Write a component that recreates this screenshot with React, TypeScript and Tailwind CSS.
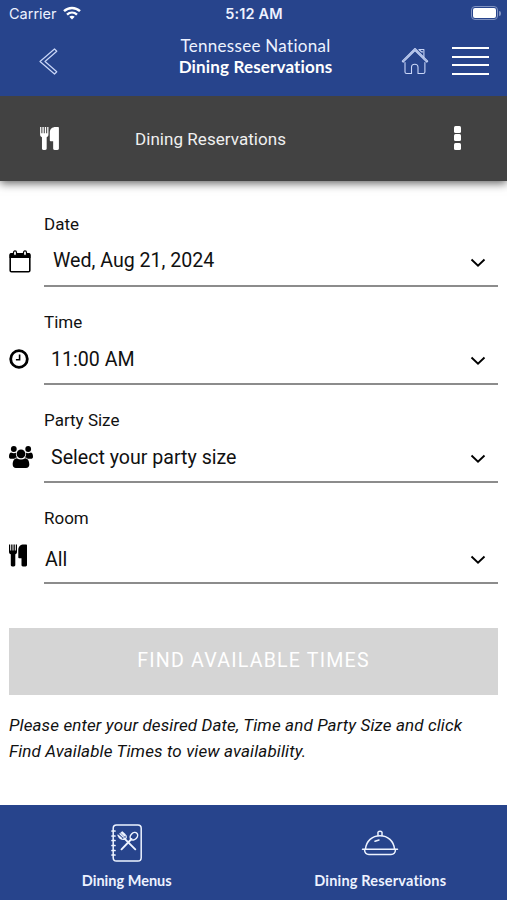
import type { ReactNode } from 'react';

function UtensilsIcon({ className }: { className: string }) {
  return (
    <svg viewBox="0 0 18 22" className={className} fill="currentColor">
      <path d="M0 0h1.2v6h1V0h1.3v6h1V0h1.3v6h1V0H8v7.2c0 1.4-.7 2.1-1.7 2.6v10.8c0 .9-.6 1.4-1.4 1.4H3.2c-.9 0-1.4-.5-1.4-1.4V9.8C.7 9.3 0 8.6 0 7.2Z" />
      <path d="M15 0h2c.7 0 1 .3 1 1v19.6c0 .9-.6 1.4-1.4 1.4h-2.7c-.9 0-1.4-.5-1.4-1.4v-6.900h-2.400c-.5 0-.8-.3-.8-.8V5.500C9.300 2 11.300 0 15 0Z" />
    </svg>
  );
}

function CalendarIcon() {
  return (
    <svg viewBox="0 0 22 23" className="h-[23px] w-[22px]">
      <path d="M2 3h18a1.5 1.5 0 0 1 1.5 1.5V8H.5V4.5A1.5 1.5 0 0 1 2 3Z" fill="#000" />
      <rect x="1.2" y="4" width="19.6" height="17.8" rx="1.3" fill="none" stroke="#000" strokeWidth="1.6" />
      <rect x="4.5" y=".9" width="3" height="4.6" rx="1.5" fill="#fff" stroke="#000" strokeWidth="1.2" />
      <rect x="14.5" y=".9" width="3" height="4.6" rx="1.5" fill="#fff" stroke="#000" strokeWidth="1.2" />
    </svg>
  );
}

function ClockIcon() {
  return (
    <svg viewBox="0 0 20 20" className="mt-px h-5 w-5" fill="none" stroke="#000">
      <circle cx="10" cy="10" r="8.3" strokeWidth="2.8" />
      <path d="M10.6 5.5v5.200H6.900" strokeWidth="1.6" />
    </svg>
  );
}

function GroupIcon() {
  return (
    <svg viewBox="0 0 24 22" className="h-[22px] w-6" fill="#000">
      <circle cx="4.8" cy="3" r="2.9" />
      <circle cx="19.2" cy="3" r="2.9" />
      <path d="M2 6.5c2 .9 4 .8 5 .2-.4 2.300.2 3.700 1.300 4.900-1.300 0-2.200.5-3 1.200H2.200C.8 12.800 0 12 0 10.700c0-2 .5-4 2-4.200ZM22 6.500c-2 .9-4 .8-5 .2.400 2.300-.2 3.700-1.300 4.900 1.300 0 2.200.5 3 1.200h3.100c1.400 0 2.200-.8 2.200-2.100 0-2-.5-4-2-4.200Z" />
      <circle cx="12" cy="7.8" r="4.4" />
      <path d="M7.800 12.200c2.700 1.800 5.700 1.800 8.400 0 2.900.3 4.100 3 4.100 6.400 0 2.200-1.200 3.400-3.300 3.400H7c-2.100 0-3.300-1.200-3.300-3.400 0-3.400 1.200-6.100 4.100-6.400Z" />
    </svg>
  );
}

function HomeIcon() {
  return (
    <svg viewBox="0 0 28 28" className="h-7 w-7" fill="none" stroke="#c9d6f7" strokeWidth="1.1" strokeLinejoin="round" strokeLinecap="round">
      <path d="M1.300 14.200 14 1.500l12.700 12.700-.9 1L14 3.500 2.200 15.200Z" />
      <path d="M4 15.500v9.400c0 1 .6 1.600 1.600 1.600h4.900v-6.200c0-4 6.500-4 6.500 0v6.200h5.300c1 0 1.600-.6 1.600-1.600v-9.400M18 2.500h4.900v7.600M18 2.500l2.500 2.400h1" />
    </svg>
  );
}

function MenuBookIcon() {
  return (
    <svg viewBox="0 0 32 38" className="h-[38px] w-8" fill="none" stroke="#edf3ff" strokeWidth="1.5" strokeLinecap="round">
      <rect x="2.2" y="1" width="28" height="36" rx="3.3" />
      <path d="M1 7h3M1 12h3M1 16.500h3M1 21.500h3M1 26.500h3M1 31h3" strokeWidth="1.7" />
      <path d="m10.500 25.300 10-10.300M24.300 25.300l-11-11" strokeWidth="1.9" />
      <ellipse cx="22.9" cy="12.2" rx="4.2" ry="3.2" transform="rotate(-45 22.9 12.2)" />
      <path d="M7 11.200c1.400 3 3 4.600 6.200 4.200 2.200-.3 3-3.200.8-4.900L11.200 8M9 9.700l3.300 3.300M10.200 8.600l3.200 3.200M7 11.200l3.500 3" strokeWidth="1.3" />
    </svg>
  );
}

function ClocheIcon() {
  return (
    <svg viewBox="0 0 38 26" className="h-[26px] w-[38px]" fill="none" stroke="#edf3ff" strokeWidth="1.5" strokeLinecap="round" strokeLinejoin="round">
      <path d="M4.500 19.200C5.200 11 11.200 5.800 19 5.800S32.800 11 33.500 19.200M1.500 19.300h35" />
      <path d="M3.500 19.500c.2 3.500 1.700 5 4.500 5h22c2.800 0 4.300-1.500 4.500-5" />
      <path d="M17 5.500V3.800c-1-3.500 5-3.500 4 0v1.700M14 11.300l4-1.300" />
    </svg>
  );
}

function Chevron() {
  return (
    <svg viewBox="0 0 16 10" className="mr-3 mt-1 h-2.5 w-4" fill="none" stroke="#000" strokeWidth="1.9">
      <path d="m1.500 1.500 6.500 6.200 6.500-6.200" />
    </svg>
  );
}

type FieldProps = {
  label: string;
  value: string;
  icon: ReactNode;
  className: string;
  rowClass?: string;
  valueClass: string;
};

function Field({ label, value, icon, className, rowClass = '', valueClass }: FieldProps) {
  return (
    <div className={`flex shrink-0 ${className}`}>
      <div className="flex w-[35px] shrink-0 items-start pt-[38px]">{icon}</div>
      <div className="flex flex-1 flex-col border-b-2 border-[#8c8c8c]">
        <label className="h-6 shrink-0 text-[17px] leading-6">{label}</label>
        <div className={`flex flex-1 items-center justify-between whitespace-nowrap text-[19.6px] ${rowClass}`}>
          <span className={valueClass}>{value}</span>
          <Chevron />
        </div>
      </div>
    </div>
  );
}

export default function App() {
  return (
    <main className="flex h-[900px] w-[507px] flex-col overflow-hidden bg-white font-['Roboto',sans-serif] text-[#111]">
      {/* Status bar and navigation */}
      <header className="relative z-10 h-24 shrink-0 bg-[#27448c] text-[#edf2ff]">
        <div className="grid h-7 grid-cols-3 items-center pl-[9px] pr-[6px] font-['Inter',sans-serif]">
          <div className="flex items-center gap-1.5">
            <span className="text-[14.5px]">Carrier</span>
            <svg viewBox="0 0 18 14" className="-mt-0.5 h-3.5 w-[18px]" fill="none" stroke="#fff" strokeWidth="2.4">
              <path d="M1 5.200c4.500-4.300 11.500-4.300 16 0M4 8.600c2.900-2.700 7.100-2.700 10 0" />
              <path d="M6.300 10.700c1.600-1.400 3.800-1.400 5.400 0L9 13.500Z" fill="#fff" stroke="none" />
            </svg>
          </div>
          <span className="-ml-0.5 text-center text-[14.5px] font-semibold tracking-[0.15px]">5:12 AM</span>
          <div className="-mt-0.5 flex items-center justify-end gap-px">
            <div className="h-[14px] w-[27px] rounded-[4px] border border-[#8193c1] p-px">
              <div className="h-full rounded-[2px] bg-white" />
            </div>
            <div className="h-[5px] w-[2px] rounded-r bg-[#8193c1]" />
          </div>
        </div>
        <div className="flex h-[66px] items-center pl-[39px] pr-[18px]">
          <svg viewBox="0 0 19 27" className="h-[27px] w-[19px]" fill="none" stroke="#c9d6f7" strokeWidth="1.2" strokeLinejoin="round">
            <path d="M15.500 1 1 13.500 15.500 26l2.300-2.200L6 13.500 17.800 3.200Z" />
          </svg>
          <div className="ml-[120px] w-[155px] whitespace-nowrap pb-2.5 text-center font-['Lato',sans-serif] text-[17px] leading-[21px] [font-variant-ligatures:none]">
            <div className="tracking-[0.3px]">Tennessee National</div>
            <div className="font-bold tracking-[0.15px] text-white">Dining Reservations</div>
          </div>
          <div className="ml-auto flex items-center gap-[23px]">
            <HomeIcon />
            <div className="flex w-[37px] flex-col gap-[6.3px]">
              <span className="h-[2.2px] bg-white" />
              <span className="h-[2.2px] bg-white" />
              <span className="h-[2.2px] bg-white" />
              <span className="h-[2.2px] bg-white" />
            </div>
          </div>
        </div>
      </header>

      <div className="flex h-[85px] shrink-0 items-center bg-[#424242] pl-10 pr-[46px] text-white shadow-[0_2px_9px_rgba(0,0,0,0.65)]">
        <UtensilsIcon className="h-[23px] w-[19px]" />
        <h1 className="ml-[76px] pt-0.5 text-[17px] tracking-[0.05px] text-[#f0f0f0]">Dining Reservations</h1>
        <div className="ml-auto flex flex-col gap-[1.5px] pb-[2px]">
          <span className="h-[7px] w-[7px] rounded-[1.5px] bg-white" />
          <span className="h-[7px] w-[7px] rounded-[1.5px] bg-white" />
          <span className="h-[7px] w-[7px] rounded-[1.5px] bg-white" />
        </div>
      </div>

      {/* Reservation form */}
      <section className="flex flex-1 flex-col pl-[9px] pr-[9px] pt-[31px]">
        <Field label="Date" value="Wed, Aug 21, 2024" icon={<CalendarIcon />} className="h-[75px]" valueClass="pl-[9px]" />
        <Field label="Time" value="11:00 AM" icon={<ClockIcon />} className="mt-[23px] h-[75px]" valueClass="pl-[7px] pt-[3px]" />
        <Field label="Party Size" value="Select your party size" icon={<GroupIcon />} className="mt-[23px] h-[75px]" valueClass="pl-[7px] pt-[3px]" />
        <Field
          label="Room"
          value="All"
          icon={<UtensilsIcon className="h-[23px] w-[18px] text-black" />}
          className="mt-[23px] h-[78px]"
          rowClass="pt-1"
          valueClass="pl-[1px] pt-[3px]"
        />

        <button className="mt-[44px] h-[67px] shrink-0 bg-[#d5d5d5] pb-0.5 text-[19.6px] tracking-[1.2px] text-white">
          FIND AVAILABLE TIMES
        </button>
        <p className="mt-[17px] whitespace-nowrap text-[17px] italic leading-[26px] tracking-[0.12px]">
          Please enter your desired Date, Time and Party Size and click
          <br />
          Find Available Times to view availability.
        </p>
      </section>

      <nav className="grid h-[95px] shrink-0 grid-cols-2 bg-[#27448c] font-['Lato',sans-serif] text-[14.5px] font-bold text-[#edf2ff] [font-variant-ligatures:none]">
        <a className="flex flex-col items-center pt-[19px]">
          <MenuBookIcon />
          <span className="mt-[8px]">Dining Menus</span>
        </a>
        <a className="flex flex-col items-center pt-[25px]">
          <ClocheIcon />
          <span className="mt-[14px] tracking-[0.18px]">Dining Reservations</span>
        </a>
      </nav>
    </main>
  );
}
